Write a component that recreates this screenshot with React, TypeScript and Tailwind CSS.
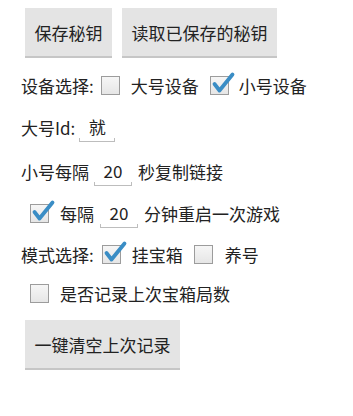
import React from "react";

function Box({ checked }: { checked?: boolean }) {
  return (
    <span className="relative inline-block w-[19px] h-[19px] shrink-0 border-[1.5px] border-[#9c9c9c] bg-gradient-to-b from-[#f6f6f6] to-[#e6e6e6]">
      {checked && (
        <svg className="absolute left-[0px] top-[-7px] w-[24px] h-[24px] overflow-visible" viewBox="0 0 24 24">
          <path d="M3.5 14 L8.5 20.5 L21.5 4.5" fill="none" stroke="#3a8dc5" strokeWidth="3.8" strokeLinecap="round" strokeLinejoin="round" />
        </svg>
      )}
    </span>
  );
}

function Field({ value, w }: { value: string; w: string }) {
  return (
    <span className={`relative inline-flex justify-center items-center h-[34px] ${w}`}>
      <span className="pb-[2px]">{value}</span>
      <span className="absolute left-0 right-0 bottom-[2px] h-[4px] border-b border-l border-r border-[#bdbdbd]" />
    </span>
  );
}

export default function App() {
  return (
    <div
      className="w-[353px] h-[416px] bg-white text-[#222] text-[17px] leading-none"
      style={{ fontFamily: '"Noto Sans CJK SC", "Noto Sans", sans-serif' }}
    >
      <div className="flex gap-[10px] pl-[25px] pt-[8px]">
        <button className="h-[50px] w-[87px] bg-[#e4e4e4] border-b-2 border-[#c6c6c6]">保存秘钥</button>
        <button className="h-[50px] w-[155px] bg-[#e4e4e4] border-b-2 border-[#c6c6c6]">读取已保存的秘钥</button>
      </div>

      <div className="flex items-center h-[34px] mt-[10px] pl-[21px]">
        <span>设备选择:</span>
        <span className="ml-[7px] flex"><Box /></span>
        <span className="ml-[11px]">大号设备</span>
        <span className="ml-[11px] flex"><Box checked /></span>
        <span className="ml-[10px]">小号设备</span>
      </div>

      <div className="flex items-center h-[34px] mt-[8px] pl-[21px]">
        <span>大号Id:</span>
        <span className="ml-[4px] flex"><Field value="就" w="w-[36px]" /></span>
      </div>

      <div className="flex items-center h-[34px] mt-[10px] pl-[21px]">
        <span>小号每隔</span>
        <span className="ml-[5px] flex"><Field value="20" w="w-[38px]" /></span>
        <span className="ml-[6px]">秒复制链接</span>
      </div>

      <div className="flex items-center h-[34px] mt-[8px] pl-[30px]">
        <Box checked />
        <span className="ml-[11px]">每隔</span>
        <span className="ml-[6px] flex"><Field value="20" w="w-[38px]" /></span>
        <span className="ml-[6px]">分钟重启一次游戏</span>
      </div>

      <div className="flex items-center h-[34px] mt-[7px] pl-[21px]">
        <span>模式选择:</span>
        <span className="ml-[8px] flex"><Box checked /></span>
        <span className="ml-[11px]">挂宝箱</span>
        <span className="ml-[11px] flex"><Box /></span>
        <span className="ml-[12px]">养号</span>
      </div>

      <div className="flex items-center h-[34px] mt-[5px] pl-[30px]">
        <Box />
        <span className="ml-[11px]">是否记录上次宝箱局数</span>
      </div>

      <div className="pl-[25px] mt-[10px]">
        <button className="h-[50px] w-[155px] bg-[#e4e4e4] border-b-2 border-[#c6c6c6]">一键清空上次记录</button>
      </div>
    </div>
  );
}
